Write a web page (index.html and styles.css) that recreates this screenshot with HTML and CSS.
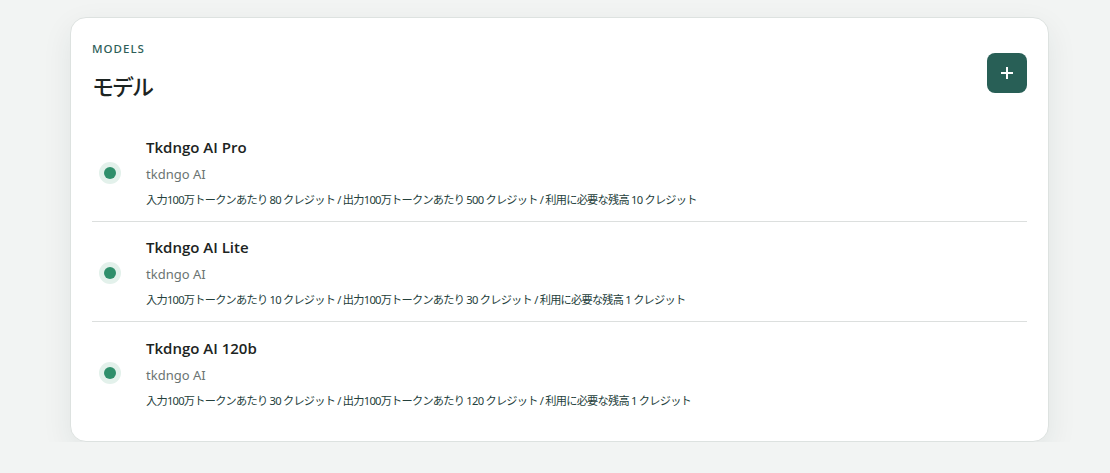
FILE: index.html
```html
<!DOCTYPE html>
<html lang="ja">
<head>
<meta charset="utf-8">
<link rel="stylesheet" href="styles.css">
</head>
<body>
<section class="card">
  <header class="card-head">
    <div>
      <div class="eyebrow">MODELS</div>
      <h1 class="title">モデル</h1>
    </div>
    <button class="add-btn" aria-label="追加">
      <svg width="14" height="14" viewBox="0 0 14 14"><path d="M7 1v12M1 7h12" stroke="#fff" stroke-width="2" fill="none"/></svg>
    </button>
  </header>
  <ul class="models">
    <li class="model">
      <span class="status"><span class="status-dot"></span></span>
      <div class="info">
        <div class="name">Tkdngo AI Pro</div>
        <div class="provider">tkdngo AI</div>
        <div class="price">入力100万トークンあたり 80 クレジット / 出力100万トークンあたり 500 クレジット / 利用に必要な残高 10 クレジット</div>
      </div>
    </li>
    <li class="model">
      <span class="status"><span class="status-dot"></span></span>
      <div class="info">
        <div class="name">Tkdngo AI Lite</div>
        <div class="provider">tkdngo AI</div>
        <div class="price">入力100万トークンあたり 10 クレジット / 出力100万トークンあたり 30 クレジット / 利用に必要な残高 1 クレジット</div>
      </div>
    </li>
    <li class="model">
      <span class="status"><span class="status-dot"></span></span>
      <div class="info">
        <div class="name">Tkdngo AI 120b</div>
        <div class="provider">tkdngo AI</div>
        <div class="price">入力100万トークンあたり 30 クレジット / 出力100万トークンあたり 120 クレジット / 利用に必要な残高 1 クレジット</div>
      </div>
    </li>
  </ul>
</section>
</body>
</html>
```
FILE: styles.css
```css
* { box-sizing: border-box; }
html, body { margin: 0; padding: 0; }
body {
  background: #f2f4f3;
  font-family: "Noto Sans", "Noto Sans CJK JP", sans-serif;
  color: #1f2a28;
  padding: 17px 62px 0 70px;
}
.card {
  width: 979px;
  height: 425px;
  background: #fff;
  border: 1px solid #dde2e0;
  border-radius: 16px;
  padding: 21px 21px;
  box-shadow: 0 10px 30px rgba(30, 50, 45, 0.08);
}
.card-head {
  display: flex;
  justify-content: space-between;
  align-items: flex-start;
}
.eyebrow {
  font-size: 11.5px;
  font-weight: 500;
  letter-spacing: 1px;
  color: #2e5e58;
  line-height: 20px;
}
.title {
  margin: 10px 0 0;
  font-size: 22px;
  font-weight: 500;
  letter-spacing: -2px;
  line-height: 34px;
  color: #1c2422;
}
.add-btn {
  margin-top: 14px;
  width: 40px;
  height: 40px;
  border: none;
  border-radius: 8px;
  background: #285f56;
  display: flex;
  align-items: center;
  justify-content: center;
  padding: 0;
}
.models {
  list-style: none;
  margin: 19px 0 0;
  padding: 0;
}
.model {
  display: flex;
  align-items: center;
  height: 100px;
  padding-top: 2px;
  border-bottom: 1px solid #dcdfde;
}
.model:last-child { border-bottom: none; }
.status {
  width: 22px;
  height: 22px;
  border-radius: 50%;
  background: #e3f1eb;
  display: flex;
  align-items: center;
  justify-content: center;
  margin-left: 7px;
  margin-right: 25px;
}
.status-dot {
  width: 12px;
  height: 12px;
  border-radius: 50%;
  background: #2f8f6b;
}
.info { display: flex; flex-direction: column; }
.name {
  font-family: "Open Sans", "Noto Sans", sans-serif;
  font-size: 15px;
  font-weight: 600;
  line-height: 22px;
  color: #1c2422;
}
.provider {
  font-size: 13px;
  color: #6b7472;
  line-height: 20px;
  margin-top: 6px;
}
.price {
  font-size: 11.2px;
  letter-spacing: -0.75px;
  color: #24403b;
  line-height: 18px;
  margin-top: 7px;
}
```
